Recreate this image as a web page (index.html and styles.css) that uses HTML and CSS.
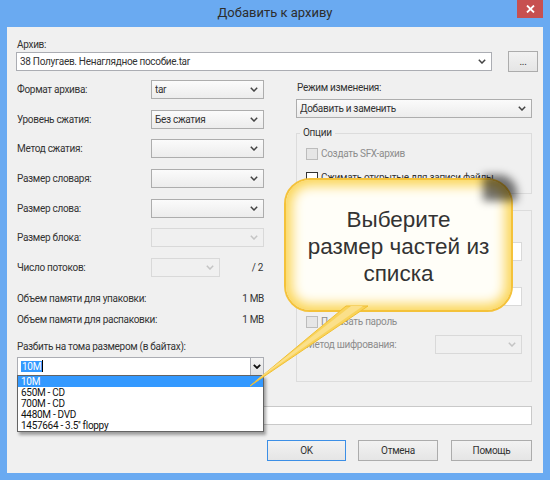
FILE: index.html
```html
<!DOCTYPE html>
<html lang="ru">
<head>
<meta charset="utf-8">
<title>Добавить к архиву</title>
<link rel="stylesheet" href="styles.css">
</head>
<body>
<div class="window">
  <div class="titlebar">
    <div class="title">Добавить к архиву</div>
    <div class="close"><svg width="9" height="8" viewBox="0 0 9 8"><path d="M1 0.5 L8 7.5 M8 0.5 L1 7.5" stroke="#fff" stroke-width="1.8"/></svg></div>
  </div>
  <div class="client">
    <div class="lbl">Архив:</div>
    <div class="archive-row">
      <div class="combo edit archive">
        <span class="val">38 Полугаев. Ненаглядное пособие.tar</span>
        <svg class="chev" width="8" height="5" viewBox="0 0 8 5"><polyline points="0.8,0.8 4,4 7.2,0.8" fill="none" stroke="#444" stroke-width="1.5"/></svg>
      </div>
      <div class="btn dots">...</div>
    </div>

    <div class="columns">
      <div class="left">
        <div class="grid">
          <div class="lbl">Формат архива:</div>
          <div class="combo"><span class="val">tar</span><svg class="chev" width="8" height="5" viewBox="0 0 8 5"><polyline points="0.8,0.8 4,4 7.2,0.8" fill="none" stroke="#444" stroke-width="1.5"/></svg></div>
          <div class="lbl">Уровень сжатия:</div>
          <div class="combo"><span class="val">Без сжатия</span><svg class="chev" width="8" height="5" viewBox="0 0 8 5"><polyline points="0.8,0.8 4,4 7.2,0.8" fill="none" stroke="#444" stroke-width="1.5"/></svg></div>
          <div class="lbl">Метод сжатия:</div>
          <div class="combo"><span class="val"></span><svg class="chev" width="8" height="5" viewBox="0 0 8 5"><polyline points="0.8,0.8 4,4 7.2,0.8" fill="none" stroke="#444" stroke-width="1.5"/></svg></div>
          <div class="lbl">Размер словаря:</div>
          <div class="combo"><span class="val"></span><svg class="chev" width="8" height="5" viewBox="0 0 8 5"><polyline points="0.8,0.8 4,4 7.2,0.8" fill="none" stroke="#444" stroke-width="1.5"/></svg></div>
          <div class="lbl">Размер слова:</div>
          <div class="combo"><span class="val"></span><svg class="chev" width="8" height="5" viewBox="0 0 8 5"><polyline points="0.8,0.8 4,4 7.2,0.8" fill="none" stroke="#444" stroke-width="1.5"/></svg></div>
          <div class="lbl">Размер блока:</div>
          <div class="combo disabled"><span class="val"></span><svg class="chev" width="8" height="5" viewBox="0 0 8 5"><polyline points="0.8,0.8 4,4 7.2,0.8" fill="none" stroke="#c4c4c4" stroke-width="1.5"/></svg></div>
          <div class="lbl">Число потоков:</div>
          <div class="threads">
            <div class="combo disabled small"><span class="val"></span><svg class="chev" width="8" height="5" viewBox="0 0 8 5"><polyline points="0.8,0.8 4,4 7.2,0.8" fill="none" stroke="#c4c4c4" stroke-width="1.5"/></svg></div>
            <span class="of">/ 2</span>
          </div>
        </div>
        <div class="mem first"><span>Объем памяти для упаковки:</span><span>1 MB</span></div>
        <div class="mem second"><span>Объем памяти для распаковки:</span><span>1 MB</span></div>
        <div class="lbl split-lbl">Разбить на тома размером (в байтах):</div>
        <div class="split-wrap">
          <div class="combo edit split">
            <span class="val"><span class="sel">10M</span><span class="caret"></span></span>
            <div class="dropbtn"><svg width="8" height="5" viewBox="0 0 8 5"><polyline points="0.8,0.8 4,4 7.2,0.8" fill="none" stroke="#111" stroke-width="1.8"/></svg></div>
          </div>
          <ul class="droplist">
            <li class="hi">10M</li>
            <li>650M - CD</li>
            <li>700M - CD</li>
            <li>4480M - DVD</li>
            <li>1457664 - 3.5'' floppy</li>
          </ul>
        </div>
      </div>

      <div class="right">
        <div class="lbl mode-lbl">Режим изменения:</div>
        <div class="combo mode"><span class="val">Добавить и заменить</span><svg class="chev" width="8" height="5" viewBox="0 0 8 5"><polyline points="0.8,0.8 4,4 7.2,0.8" fill="none" stroke="#444" stroke-width="1.5"/></svg></div>
        <fieldset class="group options">
          <legend>Опции</legend>
          <div class="check first disabled"><span class="box"></span><span>Создать SFX-архив</span></div>
          <div class="check second"><span class="box"></span><span>Сжимать открытые для записи файлы</span></div>
        </fieldset>
        <fieldset class="group crypt">
          <legend><span class="legend-space"></span></legend>
          <div class="c-gap first"></div>
          <div class="field"></div>
          <div class="c-gap"></div>
          <div class="field"></div>
          <div class="check show disabled"><span class="box"></span><span>Показать пароль</span></div>
          <div class="method">
            <span class="dis">Метод шифрования:</span>
            <div class="combo disabled meth"><span class="val"></span><svg class="chev" width="8" height="5" viewBox="0 0 8 5"><polyline points="0.8,0.8 4,4 7.2,0.8" fill="none" stroke="#c4c4c4" stroke-width="1.5"/></svg></div>
          </div>
        </fieldset>
      </div>
    </div>

    <div class="field params"></div>

    <div class="buttons">
      <div class="btn def b-ok">OK</div>
      <div class="btn b-cancel">Отмена</div>
      <div class="btn b-help">Помощь</div>
    </div>

    <div class="callout">
      <div class="callout-text">Выберите<br>размер частей из<br>списка</div>
    </div>
    <svg class="tail" width="536" height="446" viewBox="0 0 536 446">
      <polygon points="339,279 361,279 243,359" fill="#f9d35a" stroke="#f0bf33" stroke-width="1" stroke-linejoin="round"/>
      <polygon points="344,279 356,279 247,355" fill="#fbe08a"/>
    </svg>
  </div>
</div>
</body>
</html>
```

FILE: styles.css
```css
* { box-sizing: border-box; }
html, body { margin: 0; padding: 0; }
body {
  width: 550px;
  height: 480px;
  overflow: hidden;
  font-family: Roboto, "Liberation Sans", Arial, sans-serif;
  font-size: 10px;
  letter-spacing: -0.3px;
  color: #333;
  background: #6aabf2;
}
.window {
  width: 550px;
  height: 480px;
  background: #6aaaf1;
  display: flex;
  flex-direction: column;
}
.titlebar {
  height: 27px;
  display: flex;
  align-items: flex-start;
  flex: none;
}
.title {
  flex: 1;
  text-align: center;
  font-size: 13px;
  letter-spacing: 0;
  line-height: 26px;
  padding-left: 33px;
  color: #2d2d2d;
}
.close {
  width: 26px;
  height: 18px;
  margin-right: 7px;
  background: #c75050;
  display: flex;
  align-items: center;
  justify-content: center;
}
.client {
  position: relative;
  margin: 0 7px 7px;
  flex: 1;
  background: #f0f0f0;
  padding: 11px 11px 12px 9px;
  display: flex;
  flex-direction: column;
}
.lbl {
  line-height: 13px;
  padding-left: 1px;
  white-space: nowrap;
}
.archive-row {
  display: flex;
  align-items: center;
  height: 21px;
  margin-right: -6px;
}
.combo {
  height: 19px;
  border: 1px solid #adadad;
  background: linear-gradient(#fbfbfb, #ececec);
  display: flex;
  align-items: center;
  padding-left: 3px;
  padding-right: 5px;
  position: relative;
}
.combo .val { flex: 1; white-space: nowrap; overflow: hidden; line-height: 17px; }
.combo .chev { flex: none; }
.combo.edit { background: #fff; border-color: #abadb3; }
.combo.disabled { border-color: #d9d9d9; background: #f0f0f0; }
.archive { width: 476px; }
.dots {
  width: 30px;
  height: 21px;
  margin-left: 16px;
  color: #7a6f9a;
  font-size: 10px;
}
.btn {
  border: 1px solid #acacac;
  background: linear-gradient(#f2f2f2, #e5e5e5);
  display: flex;
  align-items: center;
  justify-content: center;
  color: #333;
}
.columns {
  display: flex;
  gap: 32px;
  margin-top: 8px;
}
.left { width: 248px; display: flex; flex-direction: column; }
.right { width: 236px; display: flex; flex-direction: column; }
.grid {
  display: grid;
  grid-template-columns: 135px 113px;
  grid-auto-rows: 19px;
  row-gap: 10.67px;
  align-items: center;
}
.threads { display: flex; justify-content: space-between; align-items: center; }
.combo.small { width: 69px; }
.of { padding-right: 1px; }
.mem {
  display: flex;
  justify-content: space-between;
  line-height: 14px;
  padding-left: 1px;
}
.mem.first { margin-top: 15px; }
.mem.second { margin-top: 7px; }
.split-lbl { margin-top: 13px; line-height: 14px; }
.split-wrap { position: relative; margin-top: 3px; margin-left: 1px; }
.combo.split { padding-right: 0; }
.split .val { display: flex; align-items: center; }
.sel { background: #3399ff; color: #fff; line-height: 11px; padding: 0 1px; }
.caret { width: 1px; height: 12px; background: #000; }
.dropbtn {
  width: 14px;
  height: 19px;
  margin: -1px -1px -1px 0;
  border: 1px solid #abadb3;
  background: linear-gradient(#f4f4f4, #e2e2e2);
  display: flex;
  align-items: center;
  justify-content: center;
}
.droplist {
  position: absolute;
  left: 0;
  top: 18px;
  width: 247px;
  margin: 0;
  padding: 0;
  list-style: none;
  background: #fff;
  border: 1px solid #646464;
  box-shadow: 2px 3px 3px rgba(0, 0, 0, 0.35);
  font-size: 10px;
  color: #111;
  z-index: 2;
}
.droplist li { line-height: 11px; height: 11px; padding-left: 3px; }
.droplist li.hi { background: #3399ff; color: #fff; }

.mode-lbl { margin-top: 1px; line-height: 14px; }
.combo.mode { margin-top: 4px; }
.group {
  margin: 0;
  padding: 0 9px 8px;
  border: 1px solid #dcdcdc;
  min-width: 0;
}
.group legend {
  padding: 0 3px;
  margin-left: -6px;
  line-height: 14px;
  height: 14px;
}
.legend-space { display: inline-block; width: 62px; height: 14px; }
.options { margin-top: 8px; }
.crypt { margin-top: 9px; padding-bottom: 27px; }
.check {
  display: flex;
  align-items: center;
  line-height: 14px;
  height: 14px;
  gap: 3px;
  white-space: nowrap;
}
.check .box {
  width: 12px;
  height: 12px;
  border: 1px solid #333;
  background: #fff;
  flex: none;
}
.check.disabled { color: #8d8d8d; }
.check.disabled .box { border-color: #bcbcbc; background: #e6e6e6; }
.options .check.first { margin-top: 7px; }
.options .check.second { margin-top: 10px; }
.c-gap { height: 14px; margin-top: 6px; }
.c-gap.first { margin-top: 5px; }
.field {
  height: 19px;
  margin-top: 6px;
  border: 1px solid #d9d9d9;
  background: #fff;
}
.check.show { margin-top: 9px; }
.method {
  margin-top: 6px;
  display: flex;
  justify-content: space-between;
  align-items: center;
  height: 19px;
}
.dis { color: #8d8d8d; }
.combo.meth { width: 87px; }
.params {
  margin-top: 24px;
  margin-left: 1px;
  border-color: #c9c9c9;
}
.buttons {
  display: flex;
  justify-content: flex-end;
  margin-top: 15px;
  height: 21px;
}
.buttons .btn { height: 21px; }
.b-ok { width: 79px; border-color: #3c8fe6; }
.b-cancel { width: 80px; margin-left: 12px; }
.b-help { width: 81px; margin-left: 13px; }

.callout {
  position: absolute;
  left: 277px;
  top: 151px;
  width: 229px;
  height: 134px;
  border-radius: 26px;
  border: 2px solid #f4c23a;
  background: #fffef8;
  box-shadow: inset 0 0 12px 6px #fbd65a;
  display: flex;
  align-items: center;
  justify-content: center;
  padding-top: 3px;
  z-index: 3;
}
.callout::before {
  content: "";
  position: absolute;
  right: -6px;
  top: -5px;
  width: 34px;
  height: 26px;
  border-radius: 0 18px 0 0;
  background: rgba(0, 0, 0, 0.55);
  filter: blur(4px);
  z-index: -1;
}
.callout-text {
  text-align: center;
  font-family: "Liberation Sans", Arial, sans-serif;
  font-size: 22.5px;
  letter-spacing: 0;
  line-height: 27px;
  color: #333;
}
.tail {
  position: absolute;
  left: 0;
  top: 0;
  z-index: 4;
  pointer-events: none;
}
```
